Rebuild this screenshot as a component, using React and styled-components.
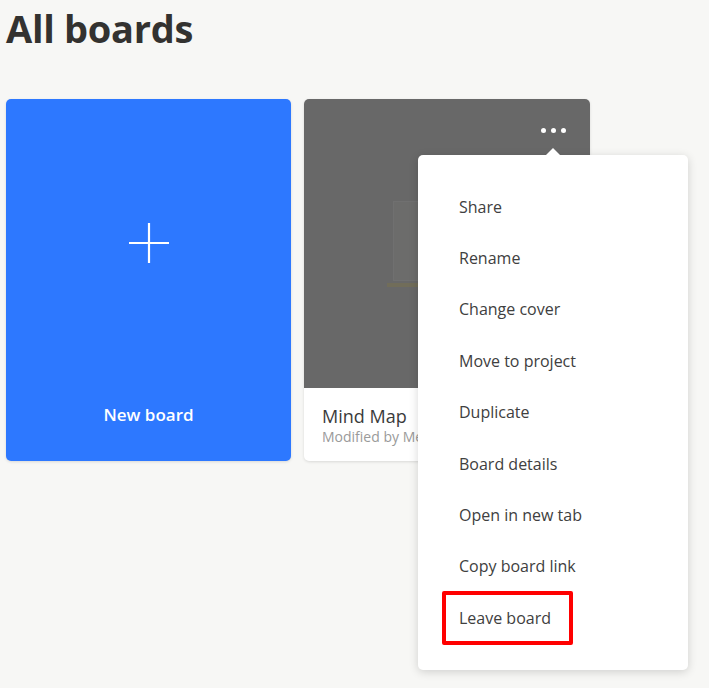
import styled, { createGlobalStyle } from 'styled-components'

const GlobalStyle = createGlobalStyle`
  body {
    margin: 0;
    background: #f7f7f5;
    font-family: "Open Sans", "Noto Sans", sans-serif;
  }
`

const Page = styled.div`
  padding: 0 6px;
  height: 688px;
  overflow: hidden;
`

const Title = styled.h1`
  margin: 0;
  padding-top: 2px;
  font-size: 38px;
  line-height: 52px;
  font-weight: 700;
  color: #333230;
  letter-spacing: -0.3px;
`

const Grid = styled.div`
  display: grid;
  grid-template-columns: 285px 286px;
  gap: 13px;
  margin-top: 45px;
`

const Card = styled.div`
  position: relative;
  height: 362px;
  border-radius: 5px;
  overflow: hidden;
  box-shadow: 0 1px 3px rgba(0, 0, 0, 0.12);
`

const NewCard = styled(Card)`
  background: #2d78ff;
  display: flex;
  flex-direction: column;
  align-items: center;
  color: #ffffff;
`

const PlusWrap = styled.div`
  margin-top: 124px;
  height: 40px;
`

const NewLabel = styled.div`
  margin-top: auto;
  margin-bottom: 35px;
  font-size: 17px;
  font-weight: 600;
`

const BoardCard = styled(Card)`
  display: flex;
  flex-direction: column;
  background: #ffffff;
  overflow: visible;
`

const Cover = styled.div`
  position: relative;
  height: 289px;
  background: #686868;
  border-radius: 5px 5px 0 0;
  display: flex;
  align-items: center;
  justify-content: center;
`

const Thumb = styled.div`
  display: flex;
  flex-direction: column;
  align-items: center;
  gap: 2px;
`

const ThumbBody = styled.div`
  width: 108px;
  height: 80px;
  background: #6c6c6b;
  border: 1px solid #707070;
  box-sizing: border-box;
`

const ThumbShelf = styled.div`
  width: 120px;
  height: 4px;
  background: #716d5a;
`

const DotsButton = styled.div`
  position: absolute;
  top: 29px;
  right: 24px;
  display: flex;
  gap: 5px;
`

const Dot = styled.span`
  width: 5px;
  height: 5px;
  border-radius: 50%;
  background: #ffffff;
`

const Info = styled.div`
  padding: 15px 18px 0;
`

const BoardName = styled.div`
  font-size: 18px;
  line-height: 26px;
  color: #3b3b3b;
`

const Modified = styled.div`
  font-size: 14px;
  line-height: 16px;
  color: #9a9a9a;
  white-space: nowrap;
`

const Menu = styled.ul`
  position: absolute;
  top: 155px;
  left: 418px;
  width: 270px;
  margin: 0;
  padding: 26px 0;
  list-style: none;
  background: #ffffff;
  border-radius: 5px;
  box-shadow: 0 2px 10px rgba(0, 0, 0, 0.16);
  box-sizing: border-box;

  &::before {
    content: '';
    position: absolute;
    top: -7px;
    left: 128px;
    border-left: 7px solid transparent;
    border-right: 7px solid transparent;
    border-bottom: 7px solid #ffffff;
  }
`

const MenuItem = styled.li`
  display: flex;
  align-items: center;
  box-sizing: border-box;
  height: ${(p) => (p.$highlight ? '54px' : '51.375px')};
  margin: ${(p) => (p.$highlight ? '-1.5px 0 -1px 24px' : '0 0 0 24px')};
  width: ${(p) => (p.$highlight ? '131px' : 'auto')};
  padding-left: ${(p) => (p.$highlight ? '13px' : '17px')};
  border: ${(p) => (p.$highlight ? '4px solid #ff0000' : 'none')};
  border-radius: 2px;
  font-size: 16px;
  color: #404040;
  white-space: nowrap;
`

const items = [
  'Share',
  'Rename',
  'Change cover',
  'Move to project',
  'Duplicate',
  'Board details',
  'Open in new tab',
  'Copy board link',
  'Leave board',
]

function Plus() {
  return (
    <svg width="40" height="40" viewBox="0 0 40 40">
      <path d="M20 0v40M0 20h40" stroke="#ffffff" strokeWidth="2.2" fill="none" />
    </svg>
  )
}

export default function App() {
  return (
    <>
      <GlobalStyle />
      <Page>
        <Title>All boards</Title>
        <Grid>
          <NewCard>
            <PlusWrap>
              <Plus />
            </PlusWrap>
            <NewLabel>New board</NewLabel>
          </NewCard>
          <BoardCard>
            <Cover>
              <Thumb>
                <ThumbBody />
                <ThumbShelf />
              </Thumb>
              <DotsButton>
                <Dot />
                <Dot />
                <Dot />
              </DotsButton>
            </Cover>
            <Info>
              <BoardName>Mind Map</BoardName>
              <Modified>Modified by Me</Modified>
            </Info>
          </BoardCard>
        </Grid>
      </Page>
      <Menu>
        {items.map((label) => (
          <MenuItem key={label} $highlight={label === 'Leave board'}>
            {label}
          </MenuItem>
        ))}
      </Menu>
    </>
  )
}
